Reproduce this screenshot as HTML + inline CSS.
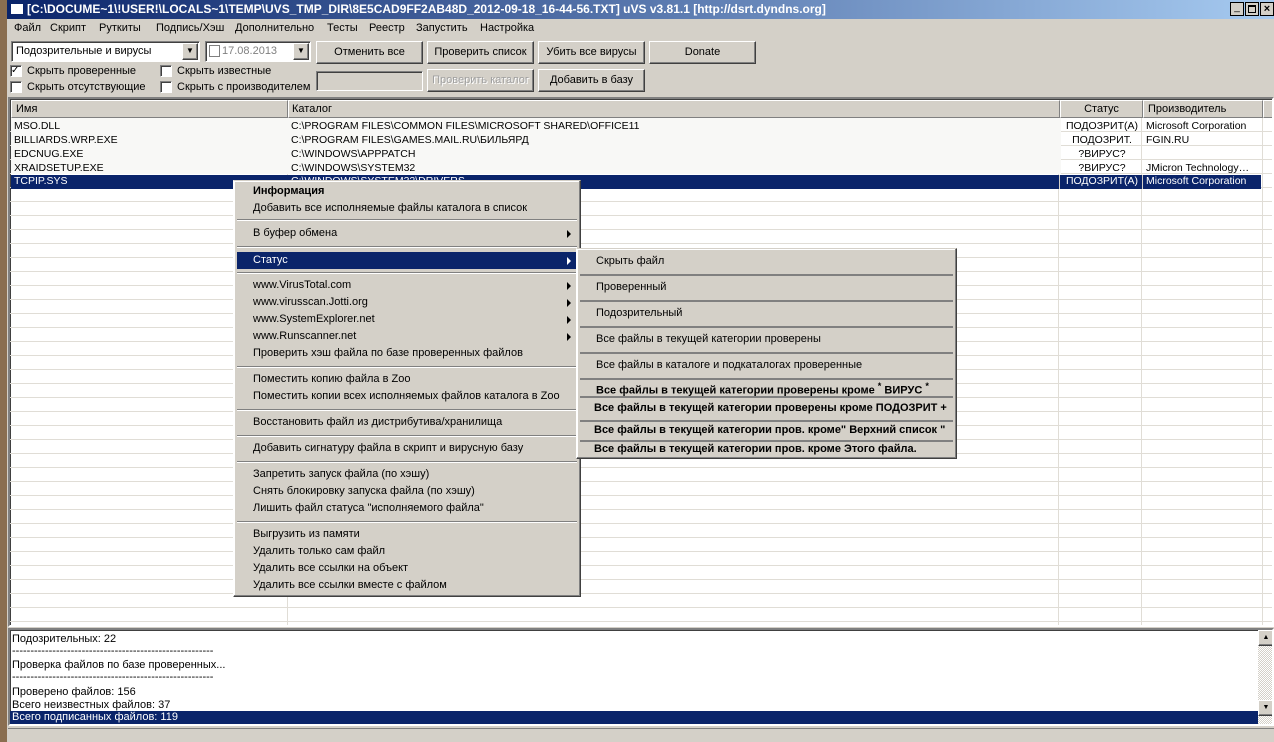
<!DOCTYPE html>
<html><head><meta charset="utf-8"><style>
*{margin:0;padding:0;box-sizing:border-box}
body{width:1274px;height:742px;overflow:hidden;background:#8a6e50;font-family:"Liberation Sans","DejaVu Sans",sans-serif;font-size:11px;color:#000;position:relative}
.a{position:absolute;white-space:nowrap}
#win{position:absolute;left:7px;top:0;width:1267px;height:742px;background:#d4d0c8}
.title{left:0;top:0;width:1267px;height:19px;background:linear-gradient(90deg,#0a246a,#a6caf0);color:#fff;font-weight:bold;font-size:12px;line-height:19px;padding-left:20px}
.btn{position:absolute;height:23px;background:#d4d0c8;border:1px solid;border-color:#fff #404040 #404040 #fff;box-shadow:inset -1px -1px #808080;text-align:center;line-height:21px}
.sunk{position:absolute;background:#fff;border:1px solid;border-color:#808080 #fff #fff #808080;box-shadow:inset 1px 1px #404040}
.cb{position:absolute;width:12px;height:12px;background:#fff;border:1px solid;border-color:#808080 #fff #fff #808080;box-shadow:inset 1px 1px #404040}
.menu{position:absolute;background:#d4d0c8;border:1px solid;border-color:#d4d0c8 #404040 #404040 #fff;box-shadow:inset -1px -1px #808080,inset 1px 1px #fff}
.mi{position:absolute;left:3px;right:3px;height:17px;line-height:17px;padding-left:16px}
.sep{position:absolute;left:3px;right:3px;height:2px;border-top:1px solid #808080;border-bottom:1px solid #fff}
.arr{position:absolute;right:6px;top:5px;width:0;height:0;border-left:4px solid #000;border-top:4px solid transparent;border-bottom:4px solid transparent}
.si{position:absolute;left:3px;right:3px;height:26px;line-height:22px;padding-left:16px;border-bottom:2px solid #808080}
.b{font-weight:bold}
.mb span{position:absolute;top:0}
</style></head><body>
<div id="win">
<div class="a title">[C:\DOCUME~1\!USER!\LOCALS~1\TEMP\UVS_TMP_DIR\8E5CAD9FF2AB48D_2012-09-18_16-44-56.TXT] uVS v3.81.1 [http://dsrt.dyndns.org]</div>
<div class="a" style="left:3px;top:3px;width:14px;height:12px;background:#fff;border:1px solid #0a246a"></div>
<div class="a" style="left:1223px;top:2px;width:14px;height:14px;background:#d4d0c8;border:1px solid #000;font-size:10px;line-height:10px;text-align:center">_</div>
<div class="a" style="left:1238px;top:2px;width:14px;height:14px;background:#d4d0c8;border:1px solid #000"><div style="margin:2px;width:8px;height:8px;border:1px solid #000;border-top-width:2px"></div></div>
<div class="a" style="left:1253px;top:2px;width:14px;height:14px;background:#d4d0c8;border:1px solid #000;font-weight:bold;line-height:12px;text-align:center">×</div>

<div class="a mb" style="left:0;top:21px;line-height:14px;width:600px;height:14px">
<span style="left:7px">Файл</span><span style="left:43px">Скрипт</span><span style="left:92px">Руткиты</span><span style="left:149px">Подпись/Хэш</span><span style="left:228px">Дополнительно</span><span style="left:320px">Тесты</span><span style="left:362px">Реестр</span><span style="left:409px">Запустить</span><span style="left:473px">Настройка</span>
</div>

<div class="sunk" style="left:4px;top:41px;width:189px;height:21px;line-height:18px;padding-left:4px">Подозрительные и вирусы</div>
<div class="btn" style="left:175px;top:43px;width:16px;height:17px;line-height:14px;font-size:8px">▼</div>
<div class="sunk" style="left:198px;top:41px;width:106px;height:21px;line-height:18px;padding-left:16px;color:#808080">17.08.2013</div>
<div class="a" style="left:202px;top:45px;width:11px;height:12px;border:1px solid #808080;background:#fff"></div>
<div class="btn" style="left:286px;top:43px;width:16px;height:17px;line-height:14px;font-size:8px">▼</div>
<div class="btn" style="left:309px;top:41px;width:107px">Отменить все</div>
<div class="btn" style="left:420px;top:41px;width:107px">Проверить список</div>
<div class="btn" style="left:531px;top:41px;width:107px">Убить все вирусы</div>
<div class="btn" style="left:642px;top:41px;width:107px">Donate</div>

<div class="cb" style="left:3px;top:65px;font-size:10px;line-height:9px;font-weight:bold">✓</div><div class="a" style="left:20px;top:65px">Скрыть проверенные</div>
<div class="cb" style="left:153px;top:65px"></div><div class="a" style="left:170px;top:65px">Скрыть известные</div>
<div class="cb" style="left:3px;top:81px"></div><div class="a" style="left:20px;top:81px">Скрыть отсутствующие</div>
<div class="cb" style="left:153px;top:81px"></div><div class="a" style="left:170px;top:81px">Скрыть с производителем</div>
<div class="sunk" style="left:309px;top:71px;width:107px;height:20px;background:#d4d0c8"></div>
<div class="btn" style="left:420px;top:69px;width:107px;color:#a0a0a0;text-shadow:1px 1px #fff">Проверить каталог</div>
<div class="btn" style="left:531px;top:69px;width:107px">Добавить в базу</div>

<div class="a" style="left:1px;top:97px;width:1266px;height:530px;background:#fff;border:2px solid;border-color:#808080 #fff #fff #808080;box-shadow:inset 1px 1px #404040;overflow:hidden">
 <div class="a" style="left:1px;top:1px;width:1264px;height:18px;background:#d4d0c8">
  <div class="a" style="left:0;top:0;width:277px;height:18px;border:1px solid;border-color:#fff #808080 #808080 #fff;padding-left:4px;line-height:16px">Имя</div>
  <div class="a" style="left:277px;top:0;width:772px;height:18px;border:1px solid;border-color:#fff #808080 #808080 #fff;padding-left:3px;line-height:16px">Каталог</div>
  <div class="a" style="left:1049px;top:0;width:83px;height:18px;border:1px solid;border-color:#fff #808080 #808080 #fff;text-align:center;line-height:16px">Статус</div>
  <div class="a" style="left:1132px;top:0;width:120px;height:18px;border:1px solid;border-color:#fff #808080 #808080 #fff;padding-left:4px;line-height:16px">Производитель</div>
  <div class="a" style="left:1252px;top:0;width:14px;height:18px;border:1px solid;border-color:#fff #808080 #808080 #fff"></div>
 </div>
 <div class="a" style="left:277px;top:19px;width:1px;height:520px;background:#e0ddd6"></div>
 <div class="a" style="left:1048px;top:19px;width:1px;height:520px;background:#e0ddd6"></div>
 <div class="a" style="left:1131px;top:19px;width:1px;height:520px;background:#e0ddd6"></div>
 <div class="a" style="left:1252px;top:19px;width:1px;height:520px;background:#e0ddd6"></div>
 <div class="a" style="left:0;top:19px;width:1264px;height:520px;background:repeating-linear-gradient(180deg,transparent 0 13px,#e0ddd6 13px 14px)"></div>
 <div class="a" style="left:1px;top:19px;width:1050px;height:56px;background:#f8f8f6"></div>
 <div class="a" style="left:1px;top:20px;line-height:14px;font-size:10.5px">
  <div class="a" style="left:3px;top:0">MSO.DLL</div><div class="a" style="left:280px;top:0">C:\PROGRAM FILES\COMMON FILES\MICROSOFT SHARED\OFFICE11</div><div class="a" style="left:1052px;top:0;width:78px;text-align:center">ПОДОЗРИТ(А)</div><div class="a" style="left:1135px;top:0">Microsoft Corporation</div>
  <div class="a" style="left:3px;top:14px">BILLIARDS.WRP.EXE</div><div class="a" style="left:280px;top:14px">C:\PROGRAM FILES\GAMES.MAIL.RU\БИЛЬЯРД</div><div class="a" style="left:1052px;top:14px;width:78px;text-align:center">ПОДОЗРИТ.</div><div class="a" style="left:1135px;top:14px">FGIN.RU</div>
  <div class="a" style="left:3px;top:28px">EDCNUG.EXE</div><div class="a" style="left:280px;top:28px">C:\WINDOWS\APPPATCH</div><div class="a" style="left:1052px;top:28px;width:78px;text-align:center">?ВИРУС?</div>
  <div class="a" style="left:3px;top:42px">XRAIDSETUP.EXE</div><div class="a" style="left:280px;top:42px">C:\WINDOWS\SYSTEM32</div><div class="a" style="left:1052px;top:42px;width:78px;text-align:center">?ВИРУС?</div><div class="a" style="left:1135px;top:42px">JMicron Technology…</div>
 </div>
 <div class="a" style="left:1px;top:76px;width:1250px;height:14px;background:#0a246a;color:#fff;line-height:13px;font-size:10.5px">
  <div class="a" style="left:3px">TCPIP.SYS</div><div class="a" style="left:280px">C:\WINDOWS\SYSTEM32\DRIVERS</div><div class="a" style="left:1052px;width:78px;text-align:center">ПОДОЗРИТ(А)</div><div class="a" style="left:1135px">Microsoft Corporation</div>
  <div class="a" style="left:1048px;top:0;width:1px;height:14px;background:#d4d0c8"></div><div class="a" style="left:1131px;top:0;width:1px;height:14px;background:#d4d0c8"></div>
 </div>
</div>

<div class="a" style="left:1px;top:628px;width:1266px;height:98px;background:#fff;border:2px solid;border-color:#808080 #fff #fff #808080;box-shadow:inset 1px 1px #404040;overflow:hidden;line-height:13.3px">
 <div class="a" style="left:2px;top:3px">Подозрительных: 22</div>
 <div class="a" style="left:2px;top:15px">-------------------------------------------------------</div>
 <div class="a" style="left:2px;top:29px">Проверка файлов по базе проверенных...</div>
 <div class="a" style="left:2px;top:41px">-------------------------------------------------------</div>
 <div class="a" style="left:2px;top:56px">Проверено файлов: 156</div>
 <div class="a" style="left:2px;top:69px">Всего неизвестных файлов: 37</div>
 <div class="a" style="left:0;top:81px;width:1248px;height:13px;background:#0a246a;color:#fff;padding-left:2px;line-height:13px">Всего подписанных файлов: 119</div>
 <div class="a" style="left:1248px;top:0;width:16px;height:94px;background:repeating-conic-gradient(#d4d0c8 0 25%,#fff 0 50%) 0 0/2px 2px"></div>
 <div class="btn" style="left:1248px;top:0;width:16px;height:16px;font-size:7px;line-height:13px">▲</div>
 <div class="btn" style="left:1248px;top:70px;width:16px;height:16px;font-size:7px;line-height:13px">▼</div>
</div>
<div class="a" style="left:1px;top:728px;width:1266px;height:14px;border-top:1px solid #808080;background:#d4d0c8"></div>
</div>

<div class="menu" style="left:233px;top:180px;width:348px;height:417px">
 <div class="mi b" style="top:2px">Информация</div>
 <div class="mi" style="top:19px">Добавить все исполняемые файлы каталога в список</div>
 <div class="sep" style="top:38px"></div>
 <div class="mi" style="top:44px">В буфер обмена<span class="arr"></span></div>
 <div class="sep" style="top:65px"></div>
 <div class="mi" style="top:71px;background:#0a246a;color:#fff">Статус<span class="arr" style="border-left-color:#fff"></span></div>
 <div class="sep" style="top:91px"></div>
 <div class="mi" style="top:96px">www.VirusTotal.com<span class="arr"></span></div>
 <div class="mi" style="top:113px">www.virusscan.Jotti.org<span class="arr"></span></div>
 <div class="mi" style="top:130px">www.SystemExplorer.net<span class="arr"></span></div>
 <div class="mi" style="top:147px">www.Runscanner.net<span class="arr"></span></div>
 <div class="mi" style="top:164px">Проверить хэш файла по базе проверенных файлов</div>
 <div class="sep" style="top:185px"></div>
 <div class="mi" style="top:190px">Поместить копию файла в Zoo</div>
 <div class="mi" style="top:207px">Поместить копии всех исполняемых файлов каталога в Zoo</div>
 <div class="sep" style="top:228px"></div>
 <div class="mi" style="top:233px">Восстановить файл из дистрибутива/хранилища</div>
 <div class="sep" style="top:254px"></div>
 <div class="mi" style="top:259px">Добавить сигнатуру файла в скрипт и вирусную базу</div>
 <div class="sep" style="top:280px"></div>
 <div class="mi" style="top:285px">Запретить запуск файла (по хэшу)</div>
 <div class="mi" style="top:302px">Снять блокировку запуска файла (по хэшу)</div>
 <div class="mi" style="top:319px">Лишить файл статуса "исполняемого файла"</div>
 <div class="sep" style="top:340px"></div>
 <div class="mi" style="top:345px">Выгрузить из памяти</div>
 <div class="mi" style="top:362px">Удалить только сам файл</div>
 <div class="mi" style="top:379px">Удалить все ссылки на объект</div>
 <div class="mi" style="top:396px">Удалить все ссылки вместе с файлом</div>
</div>

<div class="menu" style="left:576px;top:248px;width:381px;height:211px">
 <div class="si" style="top:1px">Скрыть файл</div>
 <div class="si" style="top:27px">Проверенный</div>
 <div class="si" style="top:53px">Подозрительный</div>
 <div class="si" style="top:79px">Все файлы в текущей категории проверены</div>
 <div class="si" style="top:105px">Все файлы в каталоге и подкаталогах проверенные</div>
 <div class="si b" style="top:127px;height:22px;line-height:20px">Все файлы в текущей категории проверены кроме <sup>*</sup> ВИРУС <sup>*</sup></div>
 <div class="si b" style="top:149px;height:24px;line-height:20px;padding-left:14px">Все файлы в текущей категории проверены кроме ПОДОЗРИТ +</div>
 <div class="si b" style="top:173px;height:20px;line-height:16px;padding-left:14px">Все файлы в текущей категории пров. кроме" Верхний список "</div>
 <div class="si b" style="top:193px;height:16px;line-height:14px;padding-left:14px;border:0">Все файлы в текущей категории пров. кроме Этого файла.</div>
</div>
</body></html>
